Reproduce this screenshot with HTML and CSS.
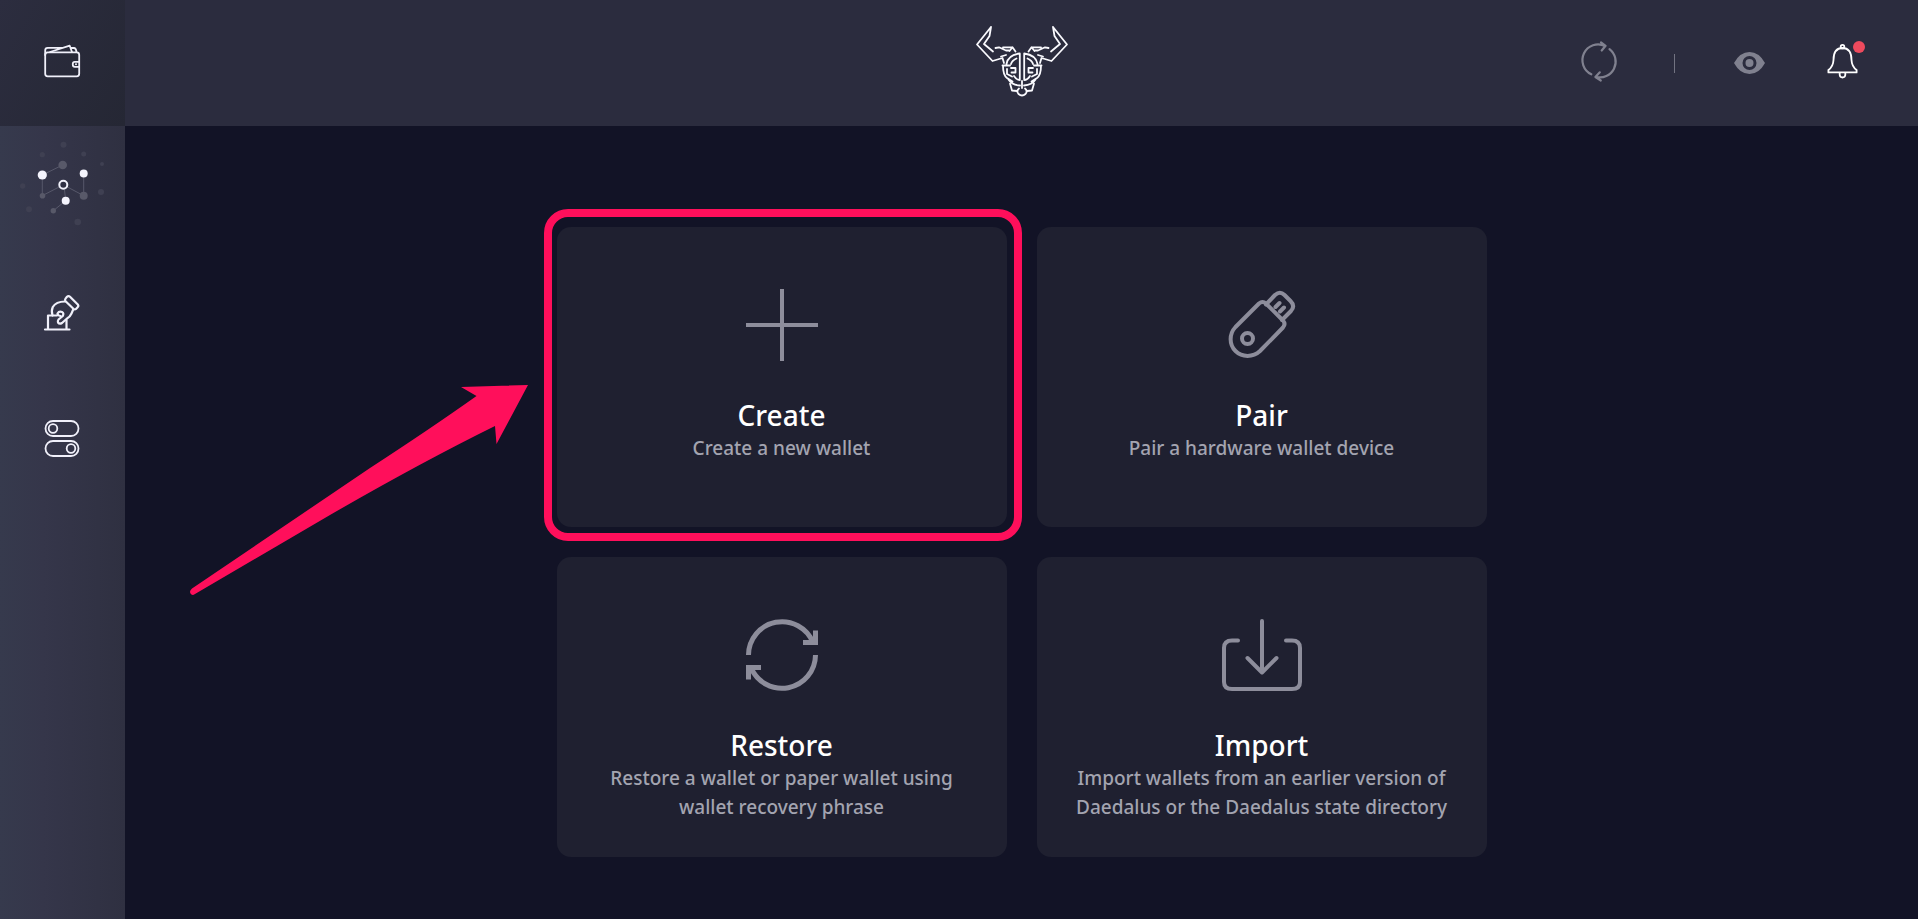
FILE: index.html
```
<!DOCTYPE html>
<html lang="en">
  <head>
    <meta charset="utf-8">
    <title>Daedalus - Add wallet</title>
    <link rel="stylesheet" href="styles.css">
  </head>

  <body>
    <nav class="sidebar">
      <button class="navItem active" aria-label="Wallets">
        <svg viewBox="0 0 125 126">
          <rect x="45.2" y="52.3" width="34" height="24" rx="2.5"/>
          <path d="M45.2 55V50.3a2.5 2.5 0 0 1 2.5-2.5H62M50 52L69.7 45.7L72 52M71.5 48h2.5q2 0 2.5 4M79 61.8h-4.2a2 2 0 0 0-2 2v1a2 2 0 0 0 2 2H79"/>
          <circle class="solid" cx="76" cy="64.3" r="1"/>
        </svg>
      </button>
      <button class="navItem" aria-label="Network">
        <svg viewBox="0 0 125 126">
          <path class="link" d="M62.7 39L42.3 49V69.7L63.3 58.8L83.7 69.7V47.5M64 59L65.7 74.7L53.3 84.7"/>
          <g class="faint">
            <circle cx="63.5" cy="18.7" r="3"/>
            <circle cx="42.3" cy="28.7" r="2.6"/>
            <circle cx="83.7" cy="28" r="2.5"/>
            <circle cx="102" cy="38" r="2"/>
            <circle cx="22.7" cy="60" r="2.7"/>
            <circle cx="101" cy="66" r="3"/>
            <circle cx="29" cy="83.3" r="3"/>
            <circle cx="77.7" cy="96" r="3.3"/>
          </g>
          <g class="dim">
            <circle cx="62.7" cy="39" r="4.3"/>
            <circle cx="83.7" cy="69.7" r="4"/>
            <circle cx="42.5" cy="69.7" r="2.8"/>
            <circle cx="53.3" cy="84.7" r="2.7"/>
          </g>
          <circle class="hole" cx="63.3" cy="58.8" r="4"/>
          <g class="solid">
            <circle cx="42.3" cy="49" r="4.6"/>
            <circle cx="83.7" cy="47.5" r="4"/>
            <circle cx="65.7" cy="74.7" r="4"/>
          </g>
        </svg>
      </button>
      <button class="navItem" aria-label="Voting">
        <svg class="bold" viewBox="0 0 125 126">
          <path d="M45 77.5H69.5M48 77V63.5H57M66.5 77V68"/>
          <path d="M67 44.8Q68.5 43.3 70 44.8L77.8 52.5Q79 54 77.6 55.3L76 57Q74.7 58 73.4 56.8L65.6 49.2Q64.5 48 65.5 46.6Z"/>
          <path d="M65 49.5Q56 49.5 52.8 55Q51 59 52.5 63.5M73 58L71.5 61.5Q70 65 67 66.5L62 71Q59.5 72.5 58 70.5Q57.5 69 58.5 67.5L62.8 64Q64.2 61 62 60Q59 59 57.5 61.5Q57.5 63.5 60.5 64"/>
        </svg>
      </button>
      <button class="navItem" aria-label="Settings">
        <svg viewBox="0 0 125 126">
          <rect x="45.5" y="43" width="33" height="15" rx="7.5"/>
          <circle cx="53" cy="50.5" r="4.3"/>
          <rect x="45.5" y="63" width="33" height="15" rx="7.5"/>
          <circle cx="71" cy="70.5" r="4.3"/>
        </svg>
      </button>
    </nav>

    <div class="page">
      <header class="topBar">
        <svg class="logo" viewBox="16 14 92 78">
          <defs>
            <g id="half">
              <path d="M31 17L17 34.5L32.5 51L42.5 48L44 53M31 17L29.5 26L24 34L33 41.5"/>
              <path d="M35.5 38L39 37.3L46 40.5H49M43 37.3H52.5L49.5 41M52.5 37.3L55.5 41.5M41 46.5L46 45"/>
              <path d="M59.8 43.5Q48 45 46.5 54M56.5 48.5Q52 50.500 51 54M42.5 55.5H50M43 55.5Q43 65 47 68L52.5 71.5M47 59V64L52 66.500M51 58H55.5V62.5H51.5M59.8 43.5V69.5M54 66Q56.5 70 59.8 70M48.500 69.500Q52 75 60 75.5"/>
              <path d="M50 73.5L52 80.5L57 81"/>
            </g>
          </defs>
          <use href="#half"/>
          <use href="#half" transform="matrix(-1 0 0 1 124 0)"/>
          <path d="M62 71V78M59 78.5Q56 81 58.5 84Q62 87 65.5 84Q68 81 65 78.5"/>
        </svg>
        <div class="actions">
          <button class="sync" aria-label="Sync status">
            <svg viewBox="18 20 36 46">
              <path d="M30.3 54.3A15.7 15.7 0 0 1 44 26M40 22.3L44.6 25.8L40.7 30.5"/>
              <path d="M48.5 29.2A15.7 15.7 0 0 1 34.8 56.8M38.8 52.3L34.4 57L39.8 60.5"/>
            </svg>
          </button>
          <span class="divider"></span>
          <button class="eye" aria-label="Discreet mode">
            <svg viewBox="174 20 34 46">
              <path d="M174 43Q180 32 189.5 32T205 43Q199 54 189.5 54T174 43Z"/>
              <circle cx="189.5" cy="43" r="5.5"/>
            </svg>
          </button>
          <button class="bell" aria-label="Notifications">
            <svg viewBox="267 20 32 46">
              <path d="M268.4 52.4H296.6V50Q291.8 46.5 291.5 40Q291.5 28 282.5 28T273.5 40Q273.2 46.5 268.4 50Z"/>
              <circle cx="282.5" cy="26.7" r="1.8"/>
              <path d="M279.7 53V55Q280 57.5 282.5 57.5T285.3 55V53"/>
            </svg>
            <span class="badge"></span>
          </button>
        </div>
      </header>

      <main class="content">
        <div class="cards">
          <div class="highlighted">
            <button class="card">
              <svg viewBox="0 0 84 80"><path d="M42 4V76M6 40H78"/></svg>
              <span class="title">Create</span>
              <span class="text">Create a new wallet</span>
            </button>
            <svg class="arrow" viewBox="188 384 342 214">
              <path d="M528 386L461 388L476.5 397Q430 430 370 469L192 589.5Q189 592 190.5 594.5T195 595L330 516Q420 464 495 427L496.5 445Z"/>
            </svg>
          </div>
          <button class="card">
            <svg viewBox="0 0 84 80">
              <g transform="translate(0 -2)">
                <path d="M15.5 44L39 20.5Q42.5 17.5 46 20.5L63 37.5Q66 41 63 44.5L40 68C33 74.5 22 74.5 15.5 68S9 51 15.5 44Z"/>
                <path d="M46 21.5L55 12Q60 7.5 64.5 12L70.5 18Q75.5 23 71 28L62 37M55.5 24L59.5 20M60 28.5L64 24.5"/>
                <circle cx="27.5" cy="55.5" r="5.5"/>
              </g>
            </svg>
            <span class="title">Pair</span>
            <span class="text">Pair a hardware wallet device</span>
          </button>
          <button class="card">
            <svg class="square" viewBox="0 0 84 80">
              <path d="M8.5 40A33.5 33.5 0 0 1 73 27.5M75.5 15.5V27.5H63"/>
              <path d="M75.5 40A33.5 33.5 0 0 1 11 52.5M8.5 64.5V52.5H21"/>
            </svg>
            <span class="title">Restore</span>
            <span class="text">Restore a wallet or paper wallet using wallet recovery phrase</span>
          </button>
          <button class="card">
            <svg viewBox="0 0 84 80">
              <path d="M18 25.5H12Q4 25.5 4 33V67Q4 74 12 74H72Q80 74 80 67V33Q80 25.5 72 25.5H66M42 6V57M27.5 43L42 57.5L56.5 43"/>
            </svg>
            <span class="title">Import</span>
            <span class="text">Import wallets from an earlier version of Daedalus or the Daedalus state directory</span>
          </button>
        </div>
      </main>
    </div>
  </body>
</html>
```
FILE: styles.css
```
* {
  box-sizing: border-box;
}
body {
  margin: 0;
  display: flex;
  min-height: 100vh;
  background-color: #121326;
  font-family: "Noto Sans", sans-serif;
}
button {
  margin: 0;
  padding: 0;
  border: none;
  background: none;
  font-family: inherit;
  cursor: pointer;
}
svg {
  display: block;
  overflow: visible;
  fill: none;
  stroke-linecap: round;
  stroke-linejoin: round;
}

/* left menu */
.sidebar {
  width: 125px;
  flex-shrink: 0;
  background: linear-gradient(90deg, #363a4d, #35364a 35%, #2f3041);
}
.navItem {
  display: block;
  width: 100%;
  height: 126px;
}
.navItem.active {
  background: linear-gradient(120deg, #2c2d3f, #252734);
}
.navItem svg {
  width: 100%;
  height: 100%;
  stroke: #f0f0fa;
  stroke-width: 1.8;
}
.navItem svg.bold {
  stroke-width: 2.2;
}
.navItem .solid {
  fill: #f4f4fd;
  stroke: none;
}
.navItem .hole {
  fill: #2f3044;
  stroke-width: 2;
}
.navItem .link {
  stroke: #57586a;
  stroke-width: 1;
}
.navItem .dim {
  fill: #585969;
  stroke: none;
}
.navItem .faint {
  fill: #3f4052;
  stroke: none;
}

.page {
  flex: 1;
}

/* header */
.topBar {
  display: grid;
  grid-template-columns: 1fr auto 1fr;
  align-items: center;
  height: 126px;
  background-color: #2b2c3e;
}
.logo {
  grid-column: 2;
  width: 92px;
  height: 78px;
  stroke: #fafafe;
  stroke-width: 1.8;
}
.actions {
  display: flex;
  align-items: center;
  justify-content: flex-end;
  gap: 59px;
  padding-right: 59px;
}
.actions svg {
  width: 100%;
  height: 46px;
}
.sync {
  width: 36px;
  stroke: #80818f;
  stroke-width: 2.2;
}
.divider {
  width: 1px;
  height: 19px;
  background-color: #727381;
}
.eye {
  width: 34px;
}
.eye path {
  fill: #80818f;
}
.eye circle {
  fill: #80818f;
  stroke: #2b2c3e;
  stroke-width: 3;
}
.bell {
  position: relative;
  width: 32px;
  stroke: #ffffff;
  stroke-width: 1.8;
}
.badge {
  position: absolute;
  top: 1px;
  right: -6px;
  width: 12px;
  height: 12px;
  border-radius: 50%;
  background-color: #ee4a5d;
}

/* wallet options */
.content {
  display: flex;
  justify-content: center;
  padding: 101px 30px 60px;
}
.cards {
  display: grid;
  grid-template-columns: 1fr 1fr;
  gap: 30px;
  width: 100%;
  max-width: 930px;
}
.card {
  display: flex;
  flex-direction: column;
  align-items: center;
  width: 100%;
  min-height: 300px;
  padding: 58px 32px 30px;
  border-radius: 14px;
  background-color: #1f2030;
}
.card svg {
  width: 84px;
  height: 80px;
  margin-bottom: 31px;
  stroke: #8d8d9b;
  stroke-width: 4;
}
.card svg.square, .highlighted .card svg {
  stroke-linecap: butt;
  stroke-linejoin: miter;
}
.card svg.square {
  stroke-width: 5;
}
.title {
  color: #ffffff;
  font-size: 28px;
  font-weight: 500;
  line-height: 38px;
}
.text {
  color: #a3a4b0;
  font-size: 19px;
  font-weight: 500;
  line-height: 29px;
}

/* pink frame and arrow */
.highlighted {
  position: relative;
}
.highlighted::after {
  content: "";
  position: absolute;
  inset: -18px -15px -14px -13px;
  border: 8px solid #ff0f5b;
  border-radius: 24px;
  pointer-events: none;
}
.arrow {
  position: absolute;
  top: 156px;
  right: calc(100% + 27px);
  width: 342px;
  height: 214px;
  fill: #ff0f5b;
}
```
